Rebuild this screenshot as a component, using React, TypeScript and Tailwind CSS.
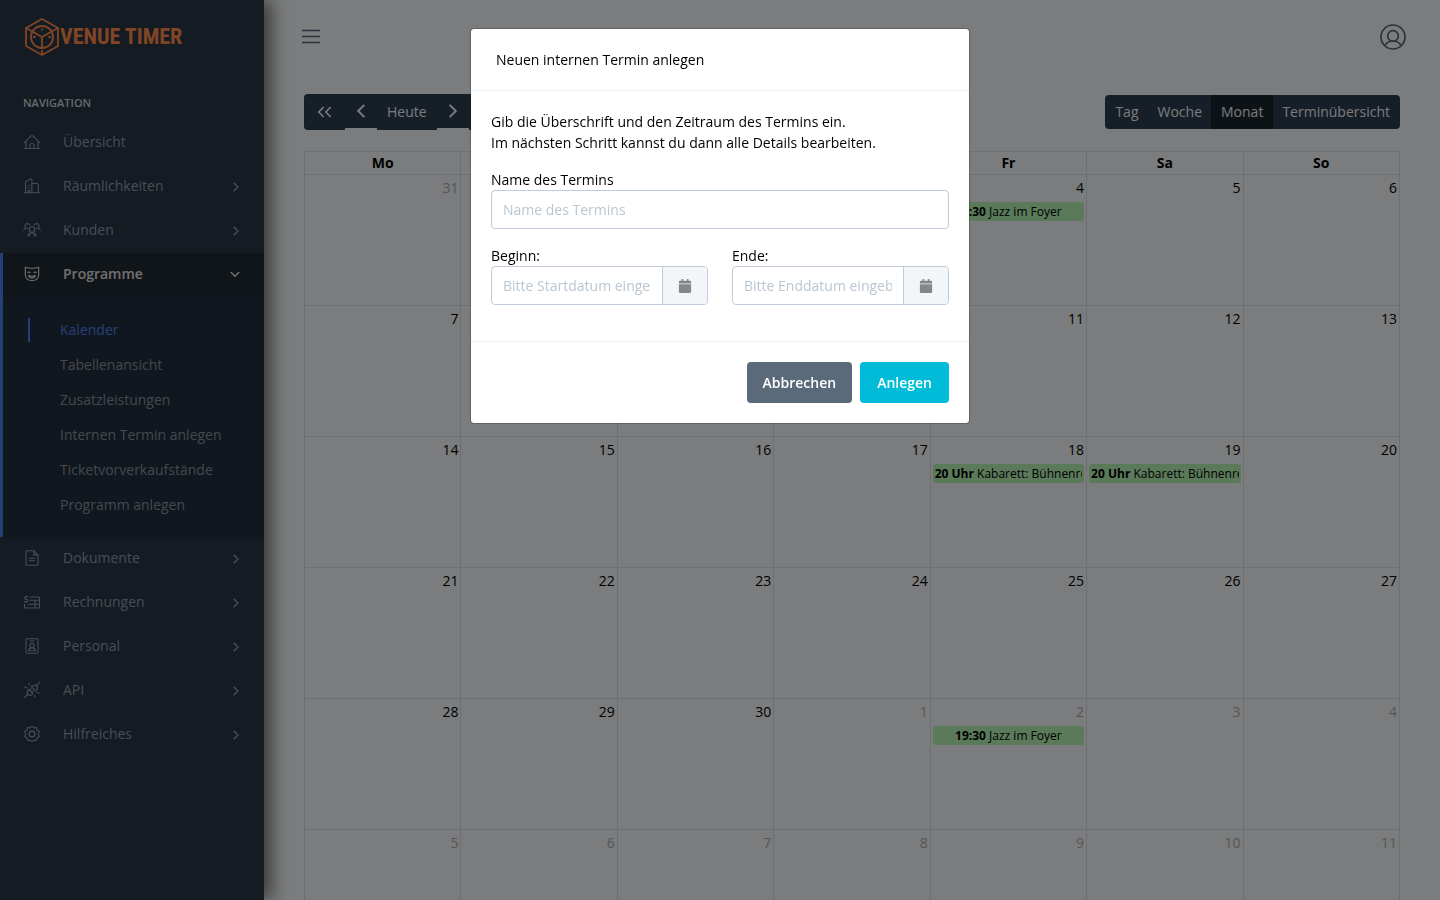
import React, { useState } from 'react';

type IconProps = { className?: string; children: React.ReactNode };

function LineIcon({ className = '', children }: IconProps) {
  return (
    <svg
      viewBox="0 0 18 18"
      className={`h-[18px] w-[18px] shrink-0 ${className}`}
      fill="none"
      stroke="currentColor"
      strokeWidth="1.1"
      strokeLinecap="round"
      strokeLinejoin="round"
      aria-hidden="true"
    >
      {children}
    </svg>
  );
}

const icons = {
  home: (
    <LineIcon>
      <path d="M1 15.5h16M3 15.5V8.2M15 15.5V8.2M1.4 9.6 8.2 2.9a1.1 1.1 0 0 1 1.6 0l6.8 6.7" />
      <path d="M7 15.3v-3.6a1 1 0 0 1 1-1h2a1 1 0 0 1 1 1v3.6" />
    </LineIcon>
  ),
  building: (
    <LineIcon>
      <path d="M1 15.8h16M2.5 15.8V5.4a1 1 0 0 1 .6-.9L8 1.9a.6.6 0 0 1 .9.5v13.4M8.9 6.5h5.4a1 1 0 0 1 1 1v8.3" />
      <path d="M5 8.5h.1M7 8.5h.1M5 10.7h.1M7 10.7h.1M5 15.6v-2.4h1.6v2.4" />
    </LineIcon>
  ),
  group: (
    <LineIcon>
      <circle cx="9" cy="8.6" r="2.8" />
      <path d="M4.8 15.2c.4-2 2-3.6 4.2-3.6s3.800 1.600 4.200 3.600M6.500 14.800l.700-1M11.500 14.800l-.700-1" />
      <path d="M6.800 4.300A2.500 2.500 0 1 0 2.900 7.100c-1.100.300-1.800 1-2.100 2.100M4.600 7.500l-.900-.300M11.200 4.300A2.500 2.500 0 1 1 15.100 7.100c1.100.300 1.800 1 2.100 2.100M13.400 7.500l.900-.300" />
    </LineIcon>
  ),
  mask: (
    <LineIcon>
      <path d="M2.300 2.300c4.300 1.300 9.100 1.300 13.400 0v7.200c0 4-3.200 6.300-6.700 6.300s-6.700-2.300-6.700-6.300z" />
      <path d="M4.800 7.600c.6-.9 1.800-.9 2.400 0M10.800 7.600c.6-.9 1.800-.9 2.400 0M5.800 10.400c1.800 1 4.600 1 6.400 0-.3 1.700-1.600 2.700-3.200 2.700s-2.900-1-3.200-2.700z" />
    </LineIcon>
  ),
  file: (
    <LineIcon>
      <path d="M3 2.700a1 1 0 0 1 1-1h6.800L15 5.900v9.400a1 1 0 0 1-1 1H4a1 1 0 0 1-1-1zM10.800 1.900v4H15M6.300 9.300h5M6.300 11.700h5" />
    </LineIcon>
  ),
  invoice: (
    <LineIcon>
      <path d="M7 4h8.500a1 1 0 0 1 1 1v9a1 1 0 0 1-1 1h-13a1 1 0 0 1-1-1v-2.500M7 7.300h9.500M5.500 11.200h11M12 7.500V15M4.600 3.900H2.700a1.100 1.100 0 0 0 0 2.300h.9a1.200 1.200 0 0 1 0 2.400H1.200M3.100 2.900v1M3.100 8.600v1" />
    </LineIcon>
  ),
  badge: (
    <LineIcon>
      <rect x="3" y="1.700" width="12" height="14.600" rx="0.800" />
      <circle cx="9" cy="8.400" r="2.200" />
      <path d="M7 4h4M5.500 13.800c.300-1.800 1.700-3 3.500-3s3.200 1.200 3.500 3z" />
    </LineIcon>
  ),
  plug: (
    <LineIcon>
      <path d="m1.400 16.600 3.800-3.800M12.800 5.200l3.800-3.800M5.300 8.200l4.500 4.500-1 .9a2.700 2.700 0 0 1-3.900-3.900zM8.200 5.300l4.500 4.500 1-.9a2.700 2.700 0 0 0-3.900-3.900zM6.500 9.400l1.600-1.600M8.600 11.500l1.600-1.600" />
      <path d="M6.600 3.900 5.900 2M3.800 6.700l-2-.8M11.400 14.200l.700 1.900M14.200 11.400l1.900.7" />
    </LineIcon>
  ),
  gear: (
    <LineIcon>
      <path d="m7.700 2.300.3-.5a1.200 1.200 0 0 1 2 0l.9 1.200 1.500-.4a1.200 1.200 0 0 1 1.500 1.100l.1 1.500 1.500.5a1.200 1.200 0 0 1 .6 1.800L15.200 9l.9 1.500a1.200 1.200 0 0 1-.6 1.800l-1.500.5-.1 1.500a1.200 1.200 0 0 1-1.500 1.100l-1.500-.4-.9 1.200a1.200 1.200 0 0 1-2 0L7.100 15l-1.500.4a1.200 1.200 0 0 1-1.500-1.100L4 12.800l-1.500-.5a1.200 1.200 0 0 1-.6-1.800L2.800 9l-.9-1.500a1.200 1.200 0 0 1 .6-1.800L4 5.200l.1-1.500a1.200 1.200 0 0 1 1.500-1.100l1.500.4z" />
      <circle cx="9" cy="9" r="2.900" />
    </LineIcon>
  ),
};

const navTop = [
  { label: 'Übersicht', icon: icons.home, expandable: false },
  { label: 'Räumlichkeiten', icon: icons.building, expandable: true },
  { label: 'Kunden', icon: icons.group, expandable: true },
];

const subItems = [
  'Kalender',
  'Tabellenansicht',
  'Zusatzleistungen',
  'Internen Termin anlegen',
  'Ticketvorverkaufstände',
  'Programm anlegen',
];

const navBottom = [
  { label: 'Dokumente', icon: icons.file, expandable: true },
  { label: 'Rechnungen', icon: icons.invoice, expandable: true },
  { label: 'Personal', icon: icons.badge, expandable: true },
  { label: 'API', icon: icons.plug, expandable: true },
  { label: 'Hilfreiches', icon: icons.gear, expandable: true },
];

const weekdays = ['Mo', 'Di', 'Mi', 'Do', 'Fr', 'Sa', 'So'];

type CalendarEvent = { time: string; title: string };
type Day = { day: number; muted?: boolean; event?: CalendarEvent };

const jazz: CalendarEvent = { time: '19:30', title: 'Jazz im Foyer' };
const kabarett: CalendarEvent = { time: '20 Uhr', title: 'Kabarett: Bühnenreif' };

const range = (from: number, to: number, muted = false): Day[] =>
  Array.from({ length: to - from + 1 }, (_, i) => ({ day: from + i, muted }));

const weeks: Day[][] = [
  [{ day: 31, muted: true }, ...range(1, 3), { day: 4, event: jazz }, ...range(5, 6)],
  range(7, 13),
  [...range(14, 17), { day: 18, event: kabarett }, { day: 19, event: kabarett }, { day: 20 }],
  range(21, 27),
  [...range(28, 30), { day: 1, muted: true }, { day: 2, muted: true, event: jazz }, ...range(3, 4, true)],
  range(5, 11, true),
];

function Chevron({ direction, className = '' }: { direction: 'left' | 'right' | 'down'; className?: string }) {
  const paths = {
    left: 'M12 3.500 6.500 9l5.500 5.500',
    right: 'M6 3.500 11.500 9 6 14.500',
    down: 'M3.500 6.500 9 12l5.500-5.500',
  };
  return (
    <svg viewBox="0 0 18 18" className={className} fill="none" stroke="currentColor" strokeWidth="1.800" aria-hidden="true">
      <path d={paths[direction]} />
    </svg>
  );
}

function Logo() {
  return (
    <a href="#" className="flex items-center text-[#ff8b4a]">
      <svg viewBox="0 0 36 40" className="h-10 w-9 shrink-0" fill="none" stroke="currentColor" strokeWidth="1.800" aria-hidden="true">
        <path d="M18 2 34 11v18l-16 9-16-9V11z" />
        <circle cx="18" cy="20" r="11" />
        <path d="M2 11l16 9 16-9M18 20v11" />
        <path d="M18 11.500v2M9 20h2.500M24.500 20H27M18 33v4" />
      </svg>
      <span className="font-['Roboto_Condensed','Liberation_Sans',sans-serif] text-[22px] leading-none font-bold whitespace-nowrap">
        VENUE TIMER
      </span>
    </a>
  );
}

function NavItem({ label, icon, expandable }: { label: string; icon: React.ReactNode; expandable: boolean }) {
  return (
    <li>
      <a href="#" className="flex h-11 items-center pr-[21px] pb-0.5 pl-[23px] text-[#929cac]">
        {icon}
        <span className="ml-[22px] flex-1">{label}</span>
        {expandable && <Chevron direction="right" className="mt-0.5 h-3.5 w-3.5" />}
      </a>
    </li>
  );
}

function Sidebar() {
  return (
    <aside className="z-10 w-[264px] shrink-0 bg-[#283644] shadow-[8px_0_16px_rgba(0,0,0,0.5)]">
      <div className="flex h-[74px] items-center pl-6">
        <Logo />
      </div>
      <nav>
        <h2 className="mt-[19px] mb-[9px] pl-[23px] text-[11px] leading-[19px] font-semibold text-[#d0d3d8] uppercase">
          Navigation
        </h2>
        <ul>
          {navTop.map((item) => (
            <NavItem key={item.label} {...item} />
          ))}
          <li className="border-l-[3px] border-[#4a80f0] bg-[#222f3c]">
            <a href="#" className="flex h-11 items-center bg-[#202a34] pr-[22px] pb-0.5 pl-5 font-semibold text-[#e0e0e0]">
              {icons.mask}
              <span className="ml-[22px] flex-1">Programme</span>
              <Chevron direction="down" className="h-3.5 w-3.5" />
            </a>
            <ul className="py-[15px]">
              {subItems.map((item, index) => (
                <li key={item} className="flex h-[35px] items-center pl-[25px]">
                  <span className={index === 0 ? 'h-6 w-[2px] bg-[#4a80f0]' : 'h-6 w-[2px]'} />
                  <a href="#" className={index === 0 ? 'ml-[30px] text-[#4a80f0]' : 'ml-[30px] text-[#8a929e]'}>
                    {item}
                  </a>
                </li>
              ))}
            </ul>
          </li>
          {navBottom.map((item) => (
            <NavItem key={item.label} {...item} />
          ))}
        </ul>
      </nav>
    </aside>
  );
}

function CalendarToolbar() {
  return (
    <div className="flex items-start justify-between text-[#f4f4f4]">
      <div className="flex items-start">
        <button type="button" aria-label="Vorheriges Jahr" className="flex h-9 w-[41px] items-center justify-center rounded-l bg-[#2c3e50]">
          <Chevron direction="left" className="-mr-[9px] h-4 w-4" />
          <Chevron direction="left" className="h-4 w-4" />
        </button>
        <button type="button" aria-label="Vorheriger Monat" className="flex h-[34px] w-8 items-center justify-center bg-[#2c3e50]">
          <Chevron direction="left" className="h-5 w-5" />
        </button>
        <button type="button" className="h-9 bg-[#2c3e50] px-[10px]">
          Heute
        </button>
        <button type="button" aria-label="Nächster Monat" className="flex h-[34px] w-8 items-center justify-center bg-[#2c3e50]">
          <Chevron direction="right" className="h-5 w-5" />
        </button>
        <button type="button" aria-label="Nächstes Jahr" className="flex h-9 w-[41px] items-center justify-center rounded-r bg-[#2c3e50]">
          <Chevron direction="right" className="h-4 w-4" />
          <Chevron direction="right" className="-ml-[9px] h-4 w-4" />
        </button>
      </div>
      <div className="mt-px flex h-[34px] overflow-hidden rounded bg-[#2c3e50]">
        <button type="button" className="px-[10px]">Tag</button>
        <button type="button" className="px-[9px]">Woche</button>
        <button type="button" className="bg-[#1a252f] px-[10px]">Monat</button>
        <button type="button" className="pr-[10px] pl-[9px]">Terminübersicht</button>
      </div>
    </div>
  );
}

function Calendar() {
  return (
    <table className="mt-[21px] w-full table-fixed border-collapse text-black">
      <thead>
        <tr className="h-[23px]">
          {weekdays.map((name) => (
            <th key={name} className="border border-[#dcdee0] p-0 align-top leading-[21px] font-bold">
              {name}
            </th>
          ))}
        </tr>
      </thead>
      <tbody>
        {weeks.map((week, index) => (
          <tr key={index} className="h-[131px]">
            {week.map(({ day, muted, event }) => (
              <td key={day} className="border border-[#dcdee0] px-[2px] py-0 align-top">
                <div className={muted ? 'pt-[2px] text-right leading-[21px] text-[#acadae]' : 'pt-[2px] text-right leading-[21px]'}>
                  {day}
                </div>
                {event && (
                  <div className="mt-1 overflow-hidden rounded-[3px] bg-[#b4f4b4] px-[2px] text-center text-xs leading-[19px] whitespace-nowrap">
                    <div className="overflow-hidden">
                      <span className="font-bold">{event.time}</span> {event.title}
                    </div>
                  </div>
                )}
              </td>
            ))}
          </tr>
        ))}
      </tbody>
    </table>
  );
}

function DateField({ id, label, placeholder }: { id: string; label: string; placeholder: string }) {
  const [value, setValue] = useState('');

  return (
    <div className="min-w-0 flex-1">
      <label htmlFor={id} className="block leading-5">
        {label}
      </label>
      <div className="flex h-[39px] overflow-hidden rounded border border-[#c0ccda]">
        <input
          id={id}
          type="text"
          className="min-w-0 flex-1 px-[11px] outline-none placeholder:text-[#bac6d2]"
          placeholder={placeholder}
          value={value}
          onChange={(e) => setValue(e.target.value)}
        />
        <button
          type="button"
          aria-label="Kalender öffnen"
          className="flex w-[45px] items-center justify-center border-l border-[#c0ccda] bg-[#f3f6f9] text-[#868686]"
        >
          <svg viewBox="0 0 14 16" className="h-[14px] w-[14px]" fill="currentColor" aria-hidden="true">
            <path d="M0 6h14v8.500a1.500 1.500 0 0 1-1.500 1.500h-11A1.500 1.500 0 0 1 0 14.500zM14 5v-1.500A1.500 1.500 0 0 0 12.500 2H11V.400A.4.4 0 0 0 10.600 0H9.400a.4.4 0 0 0-.4.400V2H5V.400A.4.4 0 0 0 4.600 0H3.400a.4.4 0 0 0-.4.400V2H1.500A1.500 1.500 0 0 0 0 3.500V5z" />
          </svg>
        </button>
      </div>
    </div>
  );
}

function AppointmentDialog() {
  const [name, setName] = useState('');

  return (
    <div className="fixed inset-0 z-20 flex items-start justify-center bg-black/50 pt-7">
      <form
        role="dialog"
        aria-labelledby="dialog-title"
        className="w-full max-w-[500px] rounded border border-black/20 bg-white bg-clip-padding text-black"
        onSubmit={(e) => e.preventDefault()}
      >
        <div className="border-b border-[#edf0f2] px-[25px] py-5">
          <h1 id="dialog-title" className="leading-[21px]">
            Neuen internen Termin anlegen
          </h1>
        </div>
        <div className="px-5 pt-5 pb-9">
          <p className="leading-[21px]">
            Gib die Überschrift und den Zeitraum des Termins ein.
            <br />
            Im nächsten Schritt kannst du dann alle Details bearbeiten.
          </p>
          <div className="mt-4">
            <label htmlFor="name" className="block leading-[21px]">
              Name des Termins
            </label>
            <input
              id="name"
              type="text"
              className="h-[39px] w-full rounded border border-[#c0ccda] px-[11px] outline-none placeholder:text-[#bac6d2]"
              placeholder="Name des Termins"
              value={name}
              onChange={(e) => setName(e.target.value)}
            />
          </div>
          <div className="mt-[17px] flex gap-6">
            <DateField id="start" label="Beginn:" placeholder="Bitte Startdatum eingeben" />
            <DateField id="end" label="Ende:" placeholder="Bitte Enddatum eingeben" />
          </div>
        </div>
        <div className="flex justify-end gap-2 border-t border-[#edf0f2] px-5 py-5 font-semibold text-white">
          <button type="button" className="h-[41px] rounded bg-[#5a6a7a] px-4">
            Abbrechen
          </button>
          <button type="submit" className="h-[41px] rounded bg-[#00bcd9] px-[17px]">
            Anlegen
          </button>
        </div>
      </form>
    </div>
  );
}

export default function App() {
  return (
    <div className="flex h-screen overflow-hidden bg-[#f6f8fa] font-['Open_Sans',sans-serif] text-sm">
      <Sidebar />
      <div className="min-w-0 flex-1">
        <header className="flex h-[74px] items-center justify-between pr-[34px] pl-[38px] text-[#55677a]">
          <button type="button" aria-label="Menü">
            <svg viewBox="0 0 18 16" className="h-4 w-[18px]" stroke="currentColor" strokeWidth="1.300" strokeLinecap="round" aria-hidden="true">
              <path d="M.500 1.500h17M.500 7.500h17M.500 13.500h17" />
            </svg>
          </button>
          <button type="button" aria-label="Benutzerkonto">
            <svg viewBox="0 0 26 26" className="h-[26px] w-[26px]" fill="none" stroke="currentColor" strokeWidth="1.700" aria-hidden="true">
              <circle cx="13" cy="13" r="12" />
              <circle cx="13" cy="12" r="5.300" />
              <path d="M5 21.500c1.600-2.900 4.500-4.500 8-4.500s6.400 1.600 8 4.500" />
            </svg>
          </button>
        </header>
        <main className="px-10 pt-5">
          <CalendarToolbar />
          <Calendar />
        </main>
      </div>
      <AppointmentDialog />
    </div>
  );
}
